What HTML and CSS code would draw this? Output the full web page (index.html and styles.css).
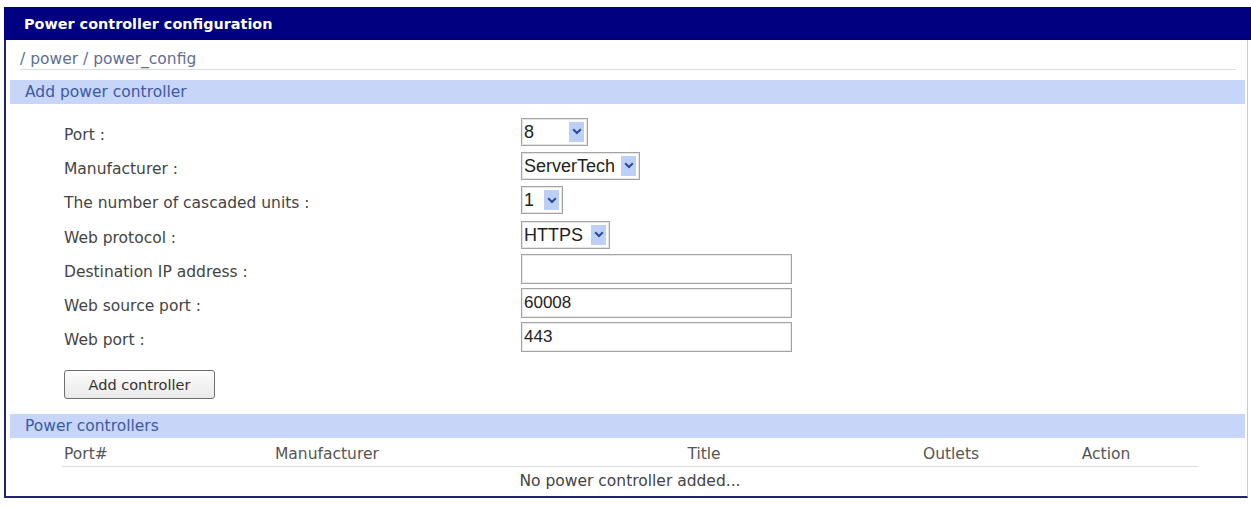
FILE: index.html
```html
<!DOCTYPE html>
<html lang="en">
<head>
  <meta charset="UTF-8" />
  <title>Power controller configuration</title>
  <link rel="stylesheet" href="styles.css">
</head>
<body>

  <div class="panel">
    <div class="panel-title">Power controller configuration</div>

    <div class="panel-body">
      <div class="crumbs"><a href="#">/ power</a> <a href="#">/ power_config</a></div>

      <div class="section-bar">Add power controller</div>

      <form class="config-form" onsubmit="return false">
        <div class="form-grid">
          <label for="port">Port :</label>
          <div class="select sel-port">
            <select id="port"><option>8</option></select>
            <span class="arrow"><svg width="10" height="7" viewBox="0 0 10 7"><path d="M1.2 1.2 L5 5 L8.8 1.2" fill="none" stroke="#2c4a9a" stroke-width="2"/></svg></span>
          </div>

          <label for="maker">Manufacturer :</label>
          <div class="select sel-maker">
            <select id="maker"><option>ServerTech</option></select>
            <span class="arrow"><svg width="10" height="7" viewBox="0 0 10 7"><path d="M1.2 1.2 L5 5 L8.8 1.2" fill="none" stroke="#2c4a9a" stroke-width="2"/></svg></span>
          </div>

          <label for="units">The number of cascaded units :</label>
          <div class="select sel-units">
            <select id="units"><option>1</option></select>
            <span class="arrow"><svg width="10" height="7" viewBox="0 0 10 7"><path d="M1.2 1.2 L5 5 L8.8 1.2" fill="none" stroke="#2c4a9a" stroke-width="2"/></svg></span>
          </div>

          <label for="proto">Web protocol :</label>
          <div class="select sel-proto">
            <select id="proto"><option>HTTPS</option></select>
            <span class="arrow"><svg width="10" height="7" viewBox="0 0 10 7"><path d="M1.2 1.2 L5 5 L8.8 1.2" fill="none" stroke="#2c4a9a" stroke-width="2"/></svg></span>
          </div>

          <label for="dest">Destination IP address :</label>
          <input class="text-in" id="dest" type="text" value="">

          <label for="srcport">Web source port :</label>
          <input class="text-in" id="srcport" type="text" value="60008">

          <label for="webport">Web port :</label>
          <input class="text-in" id="webport" type="text" value="443">
        </div>

        <button class="btn" type="submit">Add controller</button>
      </form>

      <div class="section-bar">Power controllers</div>

      <table class="ctrl-table">
        <colgroup>
          <col class="c-port">
          <col class="c-maker">
          <col class="c-title">
          <col class="c-outlets">
          <col class="c-action">
          <col>
        </colgroup>
        <thead>
          <tr>
            <th class="left">Port#</th>
            <th class="left">Manufacturer</th>
            <th>Title</th>
            <th>Outlets</th>
            <th>Action</th>
            <th></th>
          </tr>
        </thead>
        <tbody>
          <tr><td colspan="6" class="empty">No power controller added...</td></tr>
        </tbody>
      </table>
    </div>
  </div>

</body>
</html>
```

FILE: styles.css
```css
body {
  margin: 0;
  background: #fff;
  color: #444;
  font-family: "DejaVu Sans", Verdana, sans-serif;
  font-size: 15.5px;
}

/* Outer frame */
.panel {
  margin: 7px 0 0 4px;
  width: 1247px;
}

.panel-title {
  background-color: #000080;
  color: #fff;
  font-weight: bold;
  font-size: 14.4px;
  height: 33px;
  line-height: 34px;
  padding-left: 20px;
  box-sizing: border-box;
}

.panel-body {
  width: 1244px;
  border-left: 2px solid #23236e;
  border-bottom: 2px solid #23236e;
  border-right: 1px solid #c9c9d6;
  box-sizing: border-box;
}

/* Breadcrumb */
.crumbs {
  margin: 0 11px 10px 14px;
  padding-top: 10px;
  line-height: 19px;
  border-bottom: 1px solid #dcdcdc;
}

.crumbs a {
  color: #5e7094;
  text-decoration: none;
}

/* Light blue section headers */
.section-bar {
  margin: 0 2px 0 4px;
  height: 24px;
  line-height: 24px;
  padding-left: 15px;
  background-color: #c6d5f8;
  color: #3d5ba3;
}

/* Form */
.config-form {
  padding: 10.5px 0 15px 58px;
}

.form-grid {
  display: grid;
  grid-template-columns: 457px 280px;
  grid-auto-rows: 34.3px;
  align-items: center;
}

.form-grid label {
  padding-top: 6px;
}

.select {
  display: inline-flex;
  align-items: center;
  height: 28px;
  border: 1px solid #a4a4a4;
  box-shadow: inset 0 0 0 1px #e4e4e4;
  box-sizing: border-box;
  background: #fff;
  justify-self: start;
}

.select select {
  appearance: none;
  -webkit-appearance: none;
  border: none;
  background: transparent;
  font-family: "Liberation Sans", Arial, sans-serif;
  font-size: 18px;
  color: #222;
  padding: 0 0 0 2px;
  margin: 0;
  flex: 1;
  outline: none;
}

.select .arrow {
  width: 15px;
  height: 20px;
  margin-right: 3px;
  background-color: #bccff6;
  display: flex;
  align-items: center;
  justify-content: center;
}

.sel-port { width: 67px; }
.sel-maker { width: 119px; }
.sel-units { width: 42px; }
.sel-proto { width: 89px; }

.text-in {
  width: 271px;
  height: 30px;
  box-sizing: border-box;
  border: 1px solid #a4a4a4;
  box-shadow: inset 0 0 0 1px #e8e8e8;
  font-family: "Liberation Sans", Arial, sans-serif;
  font-size: 17px;
  color: #222;
  padding: 0 2px;
  margin: 0;
  outline: none;
}

.btn {
  margin-top: 15.5px;
  width: 151px;
  height: 29px;
  border: 1px solid #6f6f6f;
  border-radius: 3px;
  background: linear-gradient(#fdfdfd, #e9e9e9);
  font-family: "DejaVu Sans", Verdana, sans-serif;
  font-size: 14.5px;
  color: #333;
  padding: 0;
}

/* Controllers table */
.ctrl-table {
  margin-left: 56px;
  width: 1136px;
  border-collapse: collapse;
  table-layout: fixed;
}

.c-port { width: 211px; }
.c-maker { width: 287px; }
.c-title { width: 288px; }
.c-outlets { width: 206px; }
.c-action { width: 104px; }

.ctrl-table th {
  font-weight: normal;
  color: #555;
  height: 28px;
  padding: 4px 0 0;
  border-bottom: 1px solid #dcdcdc;
  box-sizing: border-box;
  text-align: center;
}

.ctrl-table th.left {
  text-align: left;
  padding-left: 2px;
}

.ctrl-table td.empty {
  text-align: center;
  height: 29px;
  padding: 0;
  color: #444;
}
```
